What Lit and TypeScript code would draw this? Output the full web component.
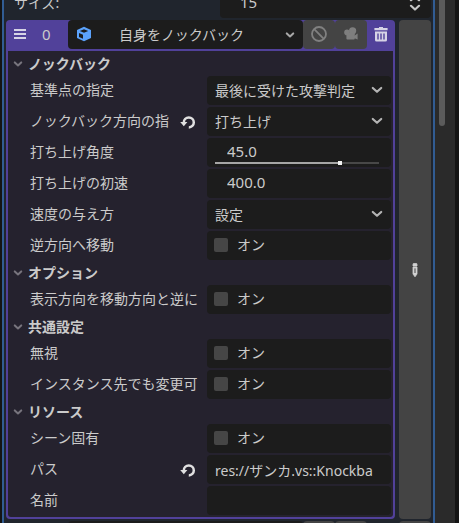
import { LitElement, html, svg, css, nothing } from "lit";
import { customElement, property } from "lit/decorators.js";

type Field =
  | { kind: "select"; label: string; value: string; revert?: boolean }
  | { kind: "slider"; label: string; value: string; min: number; max: number; revert?: boolean }
  | { kind: "number"; label: string; value: string; revert?: boolean }
  | { kind: "check"; label: string; revert?: boolean }
  | { kind: "text"; label: string; value: string; revert?: boolean };

interface Section {
  title: string;
  fields: Field[];
}

const SECTIONS: Section[] = [
  {
    title: "ノックバック",
    fields: [
      { kind: "select", label: "基準点の指定", value: "最後に受けた攻撃判定" },
      { kind: "select", label: "ノックバック方向の指", value: "打ち上げ", revert: true },
      { kind: "slider", label: "打ち上げ角度", value: "45.0", min: -105, max: 90 },
      { kind: "number", label: "打ち上げの初速", value: "400.0" },
      { kind: "select", label: "速度の与え方", value: "設定" },
      { kind: "check", label: "逆方向へ移動" },
    ],
  },
  { title: "オプション", fields: [{ kind: "check", label: "表示方向を移動方向と逆に" }] },
  {
    title: "共通設定",
    fields: [
      { kind: "check", label: "無視" },
      { kind: "check", label: "インスタンス先でも変更可" },
    ],
  },
  {
    title: "リソース",
    fields: [
      { kind: "check", label: "シーン固有" },
      { kind: "text", label: "パス", value: "res://ザンカ.vs::Knockba", revert: true },
      { kind: "text", label: "名前", value: "" },
    ],
  },
];

const icon = (w: number, h: number, body: unknown, cls = "") =>
  html`<svg class=${cls} width=${w} height=${h} viewBox="0 0 ${w} ${h}" fill="none" aria-hidden="true">${body}</svg>`;

const chevron = (cls = "") =>
  icon(12, 8, svg`<path d="M1.8 2 6 5.8 10.2 2" stroke="#b4b4b4" stroke-width="2.2" stroke-linecap="round" stroke-linejoin="round"/>`, cls);
const chevronSmall = (color: string, cls = "") =>
  icon(10, 6, svg`<path d="M1.8 1.4 5 4.4 8.2 1.4" stroke=${color} stroke-width="2" stroke-linecap="round" stroke-linejoin="round"/>`, cls);
const revertIcon = () =>
  icon(16, 16, svg`<path d="M3.8 8.4a5 5 0 1 1 5 5" stroke="#e0e0e0" stroke-width="2.5"/>
    <path d="M.2 8h7.2l-3.600 4.200z" fill="#e0e0e0"/>`);
const menuIcon = () =>
  icon(12, 10, svg`<path d="M0 1h12M0 5h12M0 9h12" stroke="#d6d3e6" stroke-width="2"/>`);
const cubeIcon = () =>
  icon(16, 16, svg`<path d="M8 .8 15 4v8L8 15.2 1 12V4z" fill="#5ba2fb"/>
    <path d="M8 3.200 12.200 5 8 6.800 3.800 5z" fill="#1c1c1c"/>
    <path d="M3 7 7 8.800v3.900L3 10.900z" fill="#1c1c1c"/>`, "lead");
const banIcon = () =>
  icon(16, 16, svg`<circle cx="8" cy="8" r="7" stroke="#808080" stroke-width="1.800"/>
    <path d="m3.200 3.200 9.600 9.600" stroke="#808080" stroke-width="1.800"/>`);
const cameraIcon = () =>
  icon(16, 16, svg`<g fill="#7e7e7e"><circle cx="9.600" cy="4.800" r="3.600"/><circle cx="4" cy="6.400" r="2.800"/>
    <rect x="3.400" y="7" width="8.400" height="6.400" rx="1"/><path d="m11 10 3.600-2.400v6L11 12z"/></g>`);
const trashIcon = () =>
  icon(14, 15, svg`<path d="M5 0h4v1h4.600v2.200H.4V1H5z" fill="#d6d3e6"/>
    <path d="M1 4.600h12V13a1.600 1.600 0 0 1-1.600 1.600H2.600A1.600 1.600 0 0 1 1 13z" fill="#d6d3e6"/>
    <path d="M4 6.400v6M7 6.400v6M10 6.400v6" stroke="#51419a" stroke-width="1.400"/>`);
const pencilIcon = () =>
  icon(6, 14, svg`<path d="M1 3V1.400Q1 .4 2 .4h2q1 0 1 1V3zM1 4h4v7l-2 2.800L1 11z" fill="#d2d2d2" stroke="#d2d2d2" stroke-width=".8"/>
    <path d="M3 5.400v4.600" stroke="#444" stroke-width="1"/>`);
const updownIcon = () =>
  icon(12, 16, svg`<path d="M2 5.200 6 1.500l4 3.700M2 10.800l4 3.700 4-3.700" stroke="#c8c8c8" stroke-width="2.200" stroke-linecap="round" stroke-linejoin="round"/>`, "trail");

const controls = css`
  * {
    box-sizing: border-box;
  }
  svg {
    display: block;
    flex: none;
  }
  button,
  input,
  select {
    margin: 0;
    border: 0;
    padding: 0;
    font: inherit;
    color: inherit;
    background: none;
    appearance: none;
    outline: none;
    border-radius: 0;
    min-width: 0;
  }
  button {
    display: grid;
    place-items: center;
  }
`;

@customElement("property-row")
class PropertyRow extends LitElement {
  @property({ attribute: false }) field!: Field;

  static styles = [
    controls,
    css`
      :host {
        display: grid;
        grid-template-columns: minmax(0, 197fr) minmax(0, 184fr);
        height: 29px;
      }
      .name {
        display: flex;
        align-items: center;
        padding: 0 11px 0 20px;
        min-width: 0;
      }
      .label {
        flex: 1;
        min-width: 0;
        padding-bottom: 2px;
        white-space: nowrap;
      }
      .box {
        display: grid;
        align-items: center;
        background: #1c1c1c;
        border-radius: 4px;
        overflow: hidden;
        min-width: 0;
      }
      .box > * {
        grid-area: 1 / 1;
      }
      .value {
        width: 100%;
        height: 29px;
        padding: 0 8px;
      }
      .number {
        padding: 0 8px 3px 20px;
        font-size: 15px;
      }
      .arrow {
        justify-self: end;
        margin: 0 8px 2px 0;
        pointer-events: none;
      }
      .check {
        display: flex;
        align-items: center;
        gap: 9px;
        padding: 0 0 2px 7px;
      }
      .tick {
        width: 14px;
        height: 14px;
        border-radius: 2px;
        background: #464646;
      }
      .slider {
        align-self: end;
        height: 4px;
        margin: 0 12px 2px 8px;
        background: linear-gradient(to right, #a6a6a6 var(--fill), #484848 var(--fill)) center / 100% 2px no-repeat;
      }
      .slider::-webkit-slider-thumb {
        appearance: none;
        width: 4px;
        height: 4px;
        background: #f2f2f2;
      }
    `,
  ];

  private control(f: Field) {
    switch (f.kind) {
      case "select":
        return html`<select id="value" class="value"><option>${f.value}</option></select>${chevron("arrow")}`;
      case "check":
        return html`<label class="check"><input id="value" class="tick" type="checkbox" />オン</label>`;
      case "slider": {
        const fill = ((Number(f.value) - f.min) / (f.max - f.min)) * 100;
        return html`<input id="value" class="value number" .value=${f.value} />
          <input class="slider" type="range" aria-label=${f.label} min=${f.min} max=${f.max}
            .value=${f.value} style="--fill: ${fill}%" />`;
      }
      case "number":
        return html`<input id="value" class="value number" .value=${f.value} />`;
      case "text":
        return html`<input id="value" class="value" .value=${f.value} />`;
    }
  }

  render() {
    const f = this.field;
    return html`
      <div class="name">
        <label class="label" for="value">${f.label}</label>
        ${f.revert ? html`<button aria-label="元に戻す">${revertIcon()}</button>` : nothing}
      </div>
      <div class="box">${this.control(f)}</div>
    `;
  }
}

@customElement("array-item")
class ArrayItem extends LitElement {
  @property({ type: Number }) index = 0;
  @property() type = "";
  @property({ type: Boolean }) open = false;

  static styles = [
    controls,
    css`
      :host {
        display: flex;
        gap: 4px;
      }
      .card {
        flex: 1;
        min-width: 0;
        overflow: hidden;
        border-radius: 4px;
      }
      .card.open {
        background: #51419a;
      }
      .head {
        display: flex;
        height: 29px;
      }
      .grip {
        width: 28px;
        padding-bottom: 1px;
      }
      .index {
        width: 34px;
        padding: 0 0 2px 8px;
        align-self: center;
        font-size: 15px;
      }
      .picker {
        flex: 1;
        min-width: 0;
        display: grid;
        align-items: center;
        background: #1c1c1c;
        border-radius: 4px;
      }
      .picker > * {
        grid-area: 1 / 1;
      }
      .lead {
        margin: 0 0 1px 8px;
        pointer-events: none;
      }
      .arrow {
        justify-self: end;
        margin-right: 8px;
        pointer-events: none;
      }
      .type {
        width: 100%;
        height: 29px;
        padding: 0 24px 0 51px;
      }
      .tool {
        width: 32px;
        padding-bottom: 1px;
        background: #444;
        border-radius: 4px;
      }
      .remove {
        width: 28px;
      }
      .body {
        display: flex;
        flex-direction: column;
        gap: 2px;
        margin: 2px;
        padding: 2px;
        background: #25222e;
        border-radius: 0 0 3px 3px;
      }
      .title {
        display: flex;
        align-items: center;
        gap: 5px;
        height: 21px;
        margin: 0;
        padding-left: 3px;
        font-size: 14px;
        font-weight: 700;
      }
      .edit {
        width: 32px;
        background: #444;
        border-radius: 4px;
      }
    `,
  ];

  render() {
    return html`
      <div class="card ${this.open ? "open" : ""}">
        <div class="head">
          <button class="grip" aria-label="並べ替え">${menuIcon()}</button>
          <span class="index">${this.index}</span>
          <div class="picker">
            <select class="type" aria-label="種類"><option>${this.type}</option></select>
            ${cubeIcon()}${chevronSmall("#a8a8a8", "arrow")}
          </div>
          <button class="tool" aria-label="無効化">${banIcon()}</button>
          <button class="tool" aria-label="カメラ">${cameraIcon()}</button>
          <button class="remove" aria-label="削除">${trashIcon()}</button>
        </div>
        ${this.open
          ? html`<div class="body">
              ${SECTIONS.map(
                (s) => html`<h3 class="title">${chevronSmall("#77747d")}${s.title}</h3>
                  ${s.fields.map((f) => html`<property-row .field=${f}></property-row>`)}`
              )}
            </div>`
          : nothing}
      </div>
      <button class="edit" aria-label="編集">${pencilIcon()}</button>
    `;
  }
}

@customElement("app-root")
class AppRoot extends LitElement {
  static styles = [
    controls,
    css`
      :host {
        display: flex;
        height: 100vh;
        overflow: hidden;
        background: #141414;
        color: #cbcbcb;
        font: 14px/20px "Noto Sans", "Noto Sans CJK JP", sans-serif;
      }
      .list {
        flex: 1;
        min-width: 0;
        display: flex;
        flex-direction: column;
        gap: 2px;
        margin-left: 2px;
        padding: 0 2px;
        border: solid #315c93;
        border-width: 0 2px;
        background: #20252d;
      }
      /* The list is scrolled part of the way down its first row. */
      .size {
        display: grid;
        grid-template-columns: minmax(0, 214fr) minmax(0, 211fr);
        flex: none;
        height: 29px;
        margin-top: -11px;
      }
      .size-label {
        align-self: center;
        padding: 0 0 2px 8px;
      }
      .size-box {
        display: grid;
        align-items: center;
        background: #1c1c1c;
        border-radius: 4px;
      }
      .size-box > * {
        grid-area: 1 / 1;
      }
      .size-value {
        padding: 0 0 3px 20px;
        font-size: 15px;
      }
      .trail {
        justify-self: end;
        margin: 0 10px 2px 0;
      }
      .track {
        width: 20px;
        padding-left: 4px;
        margin-right: 4px;
        background: #2a2a2a;
      }
      .thumb {
        width: 6px;
        height: 126px;
        background: #5b5b5b;
        border-radius: 0 0 3px 3px;
      }
    `,
  ];

  render() {
    return html`
      <div class="list">
        <div class="size">
          <label class="size-label" for="size">サイズ:</label>
          <div class="size-box"><input id="size" class="size-value" .value=${"15"} />${updownIcon()}</div>
        </div>
        <array-item index="0" type="自身をノックバック" open></array-item>
        <array-item index="1" type="自身をノックバック"></array-item>
      </div>
      <div class="track"><div class="thumb"></div></div>
    `;
  }
}
